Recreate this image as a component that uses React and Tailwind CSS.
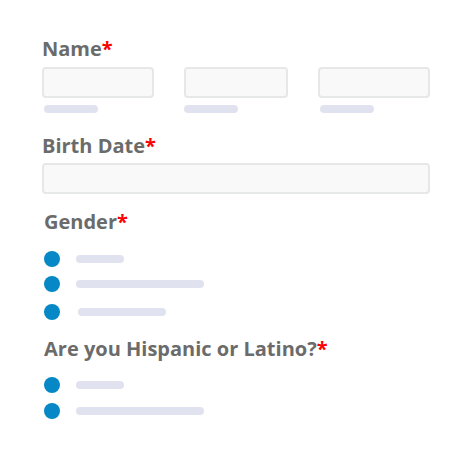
import React from "react";

const Label = ({ children, className = "" }) => (
  <div className={`h-[24px] leading-[24px] text-[20px] font-bold text-[#6b6b6b] ${className}`}>
    {children}
    <span className="text-[#ff0000]">*</span>
  </div>
);

const Bar = ({ w, className = "" }) => (
  <div className={`h-[8px] rounded-full bg-[#e1e2ef] ${w} ${className}`} />
);

const Input = ({ w }) => (
  <div className={`h-[31px] ${w} rounded-[4px] border-2 border-[#e6e8e7] bg-[#f9f9f9]`} />
);

const Radio = ({ bar, barClass = "", className = "" }) => (
  <div className={`flex items-center h-[16px] ${className}`}>
    <div className="w-[16px] h-[16px] rounded-full bg-[#0788c6]" />
    <Bar w={bar} className={barClass} />
  </div>
);

export default function App() {
  return (
    <div
      className="w-[474px] h-[452px] bg-white pt-[37px] pl-[42px]"
      style={{ fontFamily: '"Open Sans", sans-serif' }}
    >
      <Label>Name</Label>
      <div className="mt-[6px] flex gap-[30px]">
        <div className="flex flex-col">
          <Input w="w-[112px]" />
          <Bar w="w-[54px]" className="mt-[7px] ml-[2px]" />
        </div>
        <div className="flex flex-col">
          <Input w="w-[104px]" />
          <Bar w="w-[54px]" className="mt-[7px]" />
        </div>
        <div className="flex flex-col">
          <Input w="w-[112px]" />
          <Bar w="w-[54px]" className="mt-[7px] ml-[2px]" />
        </div>
      </div>

      <Label className="mt-[21px]">Birth Date</Label>
      <div className="mt-[5px]">
        <Input w="w-[388px]" />
      </div>

      <div className="pl-[2px]">
        <Label className="mt-[16px]">Gender</Label>
        <Radio className="mt-[17px]" bar="w-[48px]" barClass="ml-[16px]" />
        <Radio className="mt-[9px]" bar="w-[128px]" barClass="ml-[16px]" />
        <Radio className="mt-[12px]" bar="w-[88px]" barClass="ml-[18px]" />

        <Label className="mt-[17px]">Are you Hispanic or Latino?</Label>
        <Radio className="mt-[16px]" bar="w-[48px]" barClass="ml-[16px]" />
        <Radio className="mt-[10px]" bar="w-[128px]" barClass="ml-[16px]" />
      </div>
    </div>
  );
}
